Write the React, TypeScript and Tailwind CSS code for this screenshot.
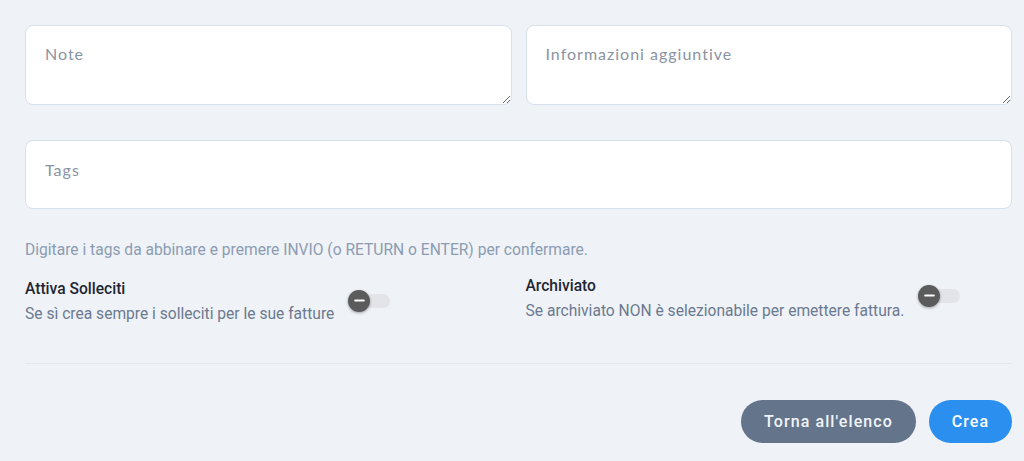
import { Minus } from 'lucide-react'

function Toggle() {
  return (
    <div className="relative h-[22px] w-[42px] shrink-0">
      <div className="absolute top-[4px] right-0 h-[14px] w-[34px] rounded-full bg-[#e2e4e8]" />
      <div className="absolute top-0 left-0 flex h-[22px] w-[22px] items-center justify-center rounded-full bg-[#5b5b5b] shadow-[0_1px_3px_rgba(0,0,0,0.35)]">
        <Minus size={15} strokeWidth={3} className="text-white" />
      </div>
    </div>
  )
}

export default function App() {
  return (
    <div className="min-h-[461px] bg-[#eff2f7] pt-[25px] pr-[12px] pl-[25px] font-['Roboto',sans-serif]">
      <div className="grid grid-cols-2 gap-[14px]">
        <textarea
          placeholder="Note"
          className="h-[80px] resize-y rounded-lg border border-[#d8e0eb] bg-white px-[19px] pt-[16px] font-['Lato',sans-serif] text-[16px] tracking-[1px] text-[#333] outline-none placeholder:text-[#8a93a3]"
        />
        <textarea
          placeholder="Informazioni aggiuntive"
          className="h-[80px] resize-y rounded-lg border border-[#d8e0eb] bg-white px-[19px] pt-[16px] font-['Lato',sans-serif] text-[16px] tracking-[1px] text-[#333] outline-none placeholder:text-[#8a93a3]"
        />
      </div>

      <input
        placeholder="Tags"
        className="mt-[35px] block h-[69px] w-full rounded-lg border border-[#d8e0eb] bg-white px-[19px] pb-[11px] font-['Lato',sans-serif] text-[16px] tracking-[1px] outline-none placeholder:text-[#8a93a3]"
      />

      <p className="mt-[31px] text-[15.6px] leading-5 text-[#8c9cb2]">
        Digitare i tags da abbinare e premere INVIO (o RETURN o ENTER) per confermare.
      </p>

      <div className="mt-[17px] grid grid-cols-2 gap-[14px]">
        <div className="flex items-center gap-[14px] pt-[2px]">
          <div>
            <div className="text-[15.6px] leading-5 font-medium text-[#1f2633]">Attiva Solleciti</div>
            <div className="mt-[5px] text-[15.6px] leading-5 text-[#6b7a90]">
              Se sì crea sempre i solleciti per le sue fatture
            </div>
          </div>
          <div className="-mt-[2px]">
            <Toggle />
          </div>
        </div>
        <div className="-mt-[4px] flex items-center gap-[14px]">
          <div>
            <div className="text-[15.6px] leading-5 font-medium text-[#1f2633]">Archiviato</div>
            <div className="mt-[5px] text-[15.6px] leading-5 text-[#6b7a90]">
              Se archiviato NON è selezionabile per emettere fattura.
            </div>
          </div>
          <div className="-mt-[6px]">
            <Toggle />
          </div>
        </div>
      </div>

      <div className="mt-[39px] border-t border-[#e2e7ef]" />

      <div className="mt-[36px] flex justify-end gap-[13px]">
        <button className="h-[43px] rounded-full bg-[#64748b] px-[23px] text-[16px] font-medium tracking-[1.1px] text-[#f1f4f8]">
          Torna all'elenco
        </button>
        <button className="h-[43px] w-[83px] rounded-full bg-[#2b8ff0] text-[16px] font-medium tracking-[1.1px] text-white">
          Crea
        </button>
      </div>
    </div>
  )
}
